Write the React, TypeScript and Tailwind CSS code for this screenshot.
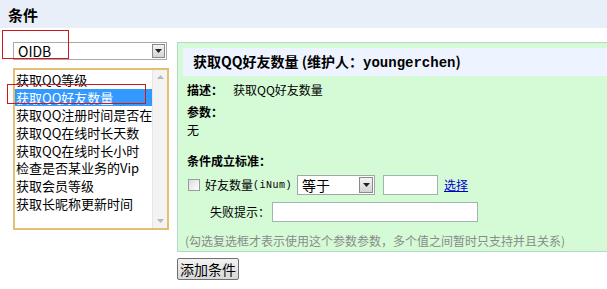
import React from 'react';

const ITEMS = [
  '获取QQ等级',
  '获取QQ好友数量',
  '获取QQ注册时间是否在',
  '获取QQ在线时长天数',
  '获取QQ在线时长小时',
  '检查是否某业务的Vip',
  '获取会员等级',
  '获取长昵称更新时间',
];

const FONT = "font-['Noto_Sans_CJK_SC','Liberation_Sans',sans-serif]";

const ArrowBox: React.FC<{ className?: string }> = ({ className = '' }) => (
  <div
    className={`flex items-center justify-center border border-[#8a8a8a] bg-gradient-to-b from-[#f4f4f4] to-[#d4d4d4] ${className}`}
  >
    <svg width="7" height="4" viewBox="0 0 7 4">
      <path d="M0 0h7L3.5 4z" fill="#222" />
    </svg>
  </div>
);

export default function App() {
  const selected = 1;

  return (
    <div className={`relative w-[607px] h-[289px] overflow-hidden bg-white text-[12px] text-black ${FONT}`}>
      {/* header band */}
      <div className="h-[28px] bg-[#e9eff8] flex items-center pl-[8px]">
        <span className="text-[15px] font-bold leading-none">条件</span>
      </div>

      <div className="flex gap-[8px] pl-[13px] pt-[14px]">
        {/* left column */}
        <div className="w-[156px] flex flex-col">
          <div className="h-[18px] w-[154px] border border-[#a9a9a9] bg-white flex items-center">
            <span className="flex-1 pl-[4px] text-[14px] leading-none">OIDB</span>
            <ArrowBox className="w-[13px] h-[14px] mr-[1px]" />
          </div>

          <div className="mt-[8px] h-[162px] border-2 border-[#e2bf72] bg-white flex">
            <div className="flex-1 pt-[1px]">
              {ITEMS.map((t, i) => (
                <div
                  key={t}
                  className={`h-[17.7px] pl-[1px] text-[13px] leading-[17.7px] whitespace-nowrap ${
                    i === selected ? 'bg-[#3399ff] text-white' : ''
                  }`}
                >
                  {t}
                </div>
              ))}
            </div>
            <div className="w-[16px] bg-[#f3f3f3] border-l border-[#e6e6e6] flex flex-col justify-between items-center py-[5px]">
              <svg width="7" height="4" viewBox="0 0 7 4">
                <path d="M0 4h7L3.5 0z" fill="#b8b8b8" />
              </svg>
              <svg width="7" height="4" viewBox="0 0 7 4">
                <path d="M0 0h7L3.5 4z" fill="#b8b8b8" />
              </svg>
            </div>
          </div>
        </div>

        {/* right column */}
        <div className="flex-1 flex flex-col">
          <div className="border border-[#b7d6cc] border-r-0 bg-[#d5fbd6] pt-[5px] pl-[5px] pb-[1px]">
            <div className="h-[28px] bg-[#eef4ff] flex items-center pl-[10px]">
              <span className="text-[14px] font-bold whitespace-nowrap">
                获取QQ好友数量 (维护人：<span className="font-['Liberation_Mono',monospace] text-[14px]">youngerchen</span>)
              </span>
            </div>

            <div className="pl-[4px]">
              <div className="mt-[5px] h-[18px] flex items-center">
                <span className="font-bold">描述：</span>
                <span className="ml-[10px]">获取QQ好友数量</span>
              </div>
              <div className="mt-[4px] h-[18px] flex items-center font-bold">参数：</div>
              <div className="h-[18px] flex items-center">无</div>

              <div className="mt-[13px] h-[18px] flex items-center font-bold">条件成立标准：</div>

              <div className="mt-[5px] h-[20px] flex items-center">
                <div className="ml-[1px] w-[12px] h-[12px] border border-[#9a9a9a] bg-gradient-to-br from-[#dcdcdc] to-[#ffffff]" />
                <span className="ml-[5px] text-[12px]">好友数量</span>
                <span className="text-[10px] font-['Liberation_Mono',monospace] tracking-[0.5px]">(iNum)</span>
                <div className="ml-[5px] w-[78px] h-[20px] border border-[#a5a5a5] bg-white flex items-center">
                  <span className="flex-1 pl-[4px] text-[14px] leading-none">等于</span>
                  <ArrowBox className="w-[14px] h-[16px] mr-[1px]" />
                </div>
                <div className="ml-[8px] w-[55px] h-[20px] border border-[#9fb5b0] bg-white" />
                <span className="ml-[6px] text-[#0000cc] underline text-[12px]">选择</span>
              </div>

              <div className="mt-[7px] h-[20px] flex items-center">
                <span className="ml-[23px] text-[12px]">失败提示：</span>
                <div className="ml-[2px] w-[206px] h-[20px] border border-[#9fb5b0] bg-white" />
              </div>

              <div className="mt-[10px] h-[18px] flex items-center text-[#8a8a8a] whitespace-nowrap -ml-[2px]">
                (勾选复选框才表示使用这个参数参数，多个值之间暂时只支持并且关系)
              </div>
            </div>
          </div>

          <div className="mt-[6px]">
            <button className="h-[22px] px-[2px] border border-[#707070] rounded-[2px] bg-gradient-to-b from-[#f2f2f2] to-[#d8d8d8] text-[14px] leading-none">
              添加条件
            </button>
          </div>
        </div>
      </div>

      {/* red annotation boxes */}
      <div className="absolute left-[2px] top-[30px] w-[67px] h-[29px] border border-[#d0171f]" />
      <div className="absolute left-[7px] top-[84px] w-[139px] h-[20px] border border-[#d0171f]" />
    </div>
  );
}
